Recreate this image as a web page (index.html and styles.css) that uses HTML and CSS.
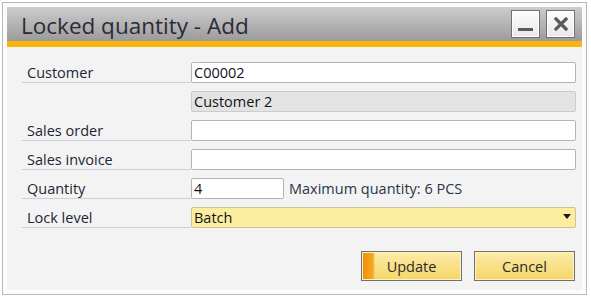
FILE: index.html
```html
<!DOCTYPE html>
<html lang="en">
<head>
    <meta charset="UTF-8">
    <title>Locked quantity - Add</title>
    <link rel="stylesheet" href="styles.css">
</head>
<body>
    <div class="frame">
        <div class="window">
            <div class="title-bar">
                <span class="title">Locked quantity - Add</span>
                <div class="title-buttons">
                    <span class="win-btn minimize"></span>
                    <span class="win-btn close">
                        <svg width="16" height="16" viewBox="0 0 16 16">
                            <path d="M3 3 L13 13 M13 3 L3 13" stroke="#5a5a5a" stroke-width="3.2" stroke-linecap="square"/>
                        </svg>
                    </span>
                </div>
            </div>
            <div class="accent"></div>
            <div class="dialog-body">
                <div class="form">
                    <label class="field-label">Customer</label>
                    <div class="field"><input type="text" class="input-field" value="C00002"></div>

                    <span class="field-label blank"></span>
                    <div class="field"><input type="text" class="input-field readonly" value="Customer 2" readonly></div>

                    <label class="field-label">Sales order</label>
                    <div class="field"><input type="text" class="input-field"></div>

                    <label class="field-label">Sales invoice</label>
                    <div class="field"><input type="text" class="input-field"></div>

                    <label class="field-label">Quantity</label>
                    <div class="field">
                        <input type="text" class="input-field qty" value="4">
                        <span class="hint">Maximum quantity: 6 PCS</span>
                    </div>

                    <label class="field-label">Lock level</label>
                    <div class="field">
                        <div class="dropdown">
                            <span>Batch</span>
                            <span class="arrow"></span>
                        </div>
                    </div>
                </div>
                <div class="actions">
                    <button class="btn primary">Update</button>
                    <button class="btn">Cancel</button>
                </div>
            </div>
        </div>
    </div>
</body>
</html>
```

FILE: styles.css
```css
body {
    margin: 0;
    padding: 0;
    background-color: #ffffff;
    font-family: "Open Sans", "DejaVu Sans", sans-serif;
    color: #222630;
}
.frame {
    margin: 2px;
    width: 575px;
    height: 283px;
    border: 1px solid #b8b8b8;
    padding: 4px;
    background-color: #fbfbfb;
}
.window {
    height: 100%;
    display: flex;
    flex-direction: column;
    background-color: #f3f3f3;
}
.title-bar {
    height: 34px;
    display: flex;
    align-items: center;
    justify-content: space-between;
    padding: 0 7px 0 14px;
    background: linear-gradient(#cdcdcd, #9b9b9b);
}
.title {
    font-size: 22.5px;
    color: #2b2b38;
    padding-top: 3px;
}
.title-buttons {
    display: flex;
    gap: 6px;
}
.win-btn {
    width: 27px;
    height: 26px;
    border: 1px solid #707070;
    background: linear-gradient(#fdfdfd, #e8e8e8);
    box-shadow: inset 0 0 0 1px #ffffff;
    display: flex;
    align-items: center;
    justify-content: center;
    position: relative;
}
.minimize::after {
    content: "";
    position: absolute;
    left: 6px;
    right: 6px;
    bottom: 6px;
    height: 3px;
    background-color: #5a5a5a;
}
.accent {
    height: 6px;
    background-color: #f9b40d;
}
.dialog-body {
    flex: 1;
    padding: 15px 6px 0 15px;
    display: flex;
    flex-direction: column;
}
.form {
    display: grid;
    grid-template-columns: 169px 1fr;
    grid-auto-rows: 21px;
    row-gap: 8px;
}
.field-label {
    font-size: 14.5px;
    padding-left: 5px;
    border-bottom: 1px solid #c9d0da;
    display: flex;
    align-items: center;
    color: #1e2634;
}
.field-label.blank {
    border-bottom: none;
}
.field {
    display: flex;
    align-items: center;
}
.input-field {
    box-sizing: border-box;
    width: 100%;
    height: 21px;
    margin: 0;
    padding: 0 2px;
    font-family: "Open Sans", "DejaVu Sans", sans-serif;
    font-size: 14.5px;
    color: #10141c;
    background-color: #ffffff;
    border: 1px solid #b4b4b4;
    border-radius: 2px;
    outline: none;
}
.input-field.readonly {
    background-color: #e3e3e3;
    border-color: #cbcbcb;
}
.input-field.qty {
    width: 93px;
    flex: none;
}
.hint {
    margin-left: 5px;
    font-size: 14.5px;
    color: #2a3445;
    white-space: nowrap;
}
.dropdown {
    box-sizing: border-box;
    width: 100%;
    height: 21px;
    padding: 0 4px 0 2px;
    display: flex;
    align-items: center;
    justify-content: space-between;
    font-size: 14.5px;
    color: #10141c;
    background-color: #fdee9f;
    border: 1px solid #c9c3a0;
    border-radius: 2px;
}
.arrow {
    width: 0;
    height: 0;
    border-left: 4px solid transparent;
    border-right: 4px solid transparent;
    border-top: 5px solid #1a1a1a;
    margin-bottom: 3px;
}
.actions {
    display: flex;
    justify-content: flex-end;
    gap: 12px;
    margin-top: 23px;
    padding-right: 1px;
}
.btn {
    width: 101px;
    height: 30px;
    font-family: "Open Sans", "DejaVu Sans", sans-serif;
    font-size: 14.5px;
    color: #2a2a2a;
    border: 1px solid #6f6f6f;
    background: linear-gradient(#fcebaa, #f5d666);
    box-shadow: inset 0 0 0 1px #fdf3c8;
    padding: 0;
    cursor: pointer;
}
.btn.primary {
    background:
        linear-gradient(to right, #f08c0c 0, #f6a922 11px, rgba(246, 190, 60, 0) 13px),
        linear-gradient(#fcebaa, #f5d666);
}
```
